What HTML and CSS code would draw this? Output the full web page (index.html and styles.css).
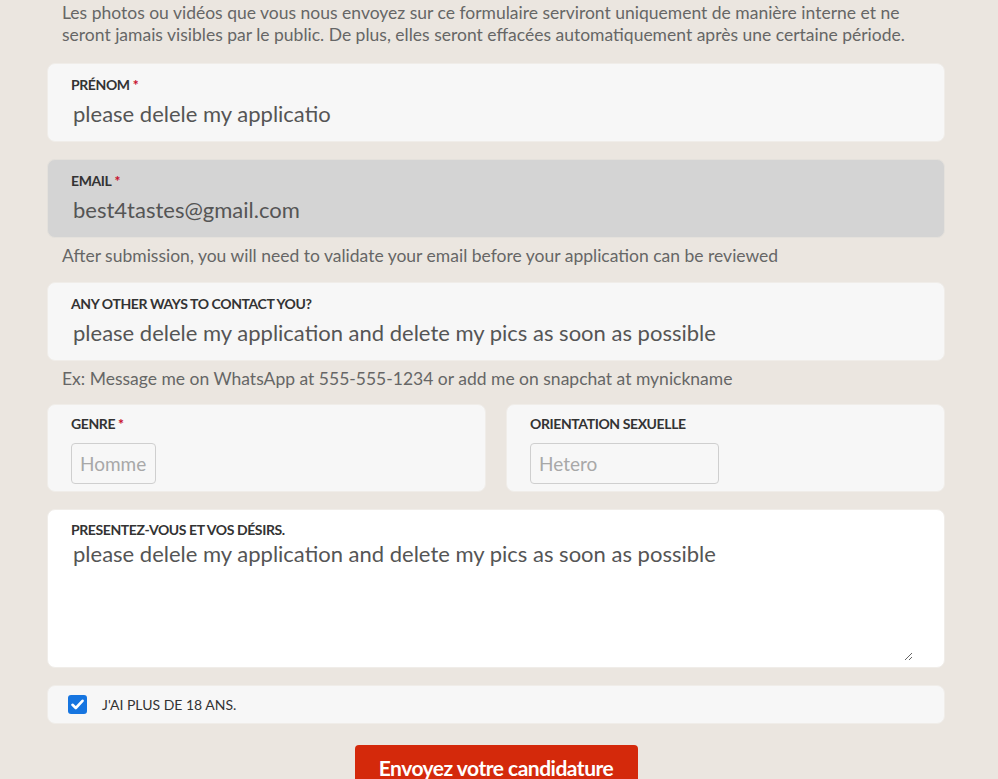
FILE: index.html
```html
<!DOCTYPE html>
<html lang="fr">
<head>
<meta charset="utf-8">
<title>Candidature</title>
<link rel="stylesheet" href="styles.css">
</head>
<body>
<div class="wrap">
  <p class="intro">Les photos ou vidéos que vous nous envoyez sur ce formulaire serviront uniquement de manière interne et ne seront jamais visibles par le public. De plus, elles seront effacées automatiquement après une certaine période.</p>

  <div class="card">
    <label class="lbl">PRÉNOM<span class="req">*</span></label>
    <input class="val" type="text" value="please delele my applicatio">
  </div>

  <div class="card card-disabled">
    <label class="lbl">EMAIL<span class="req">*</span></label>
    <input class="val" type="text" value="best4tastes@gmail.com" disabled>
  </div>
  <p class="help">After submission, you will need to validate your email before your application can be reviewed</p>

  <div class="card">
    <label class="lbl">ANY OTHER WAYS TO CONTACT YOU?</label>
    <input class="val" type="text" value="please delele my application and delete my pics as soon as possible">
  </div>
  <p class="help help-tight">Ex: Message me on WhatsApp at 555-555-1234 or add me on snapchat at mynickname</p>

  <div class="row">
    <div class="card card-half">
      <label class="lbl">GENRE<span class="req">*</span></label>
      <div class="select select-genre">Homme</div>
    </div>
    <div class="card card-half">
      <label class="lbl">ORIENTATION SEXUELLE</label>
      <div class="select select-orient">Hetero</div>
    </div>
  </div>

  <div class="card card-area">
    <label class="lbl">PRESENTEZ-VOUS ET VOS DÉSIRS.</label>
    <textarea class="area">please delele my application and delete my pics as soon as possible</textarea>
  </div>

  <div class="card card-check">
    <span class="box"><svg width="13" height="11" viewBox="0 0 13 11"><path d="M1.5 5.8 L4.8 9 L11.5 1.8" fill="none" stroke="#fff" stroke-width="2.6" stroke-linecap="round" stroke-linejoin="round"/></svg></span>
    <span class="check-lbl">J'AI PLUS DE 18 ANS.</span>
  </div>

  <div class="actions">
    <button class="submit" type="button">Envoyez votre candidature</button>
  </div>
</div>
</body>
</html>
```
FILE: styles.css
```css
* { box-sizing: border-box; }
html, body { margin: 0; padding: 0; }
body {
  background: #ebe6e0;
  font-family: Lato, "Open Sans", sans-serif;
  color: #666;
}
.wrap {
  width: 898px;
  margin-left: 47px;
  padding-top: 2px;
}
.intro {
  margin: 0 0 17px;
  padding-left: 15px;
  max-width: 865px;
  font-size: 17.5px;
  line-height: 22px;
  color: #666;
}
.card {
  background: #f7f7f7;
  border: 1px solid #f0ede9;
  border-radius: 8px;
  height: 79px;
  padding: 12px 23px 0;
  margin-bottom: 17px;
  display: flex;
  flex-direction: column;
}
.card-disabled { background: #d4d4d4; border-color: #e4e1dc; }
.lbl {
  font-size: 14px;
  font-weight: 700;
  line-height: 17px;
  color: #333;
  letter-spacing: -0.4px;
}
.req { color: #c8102e; margin-left: 3px; font-size: 14px; font-weight: 900; }
.val {
  border: none;
  background: transparent;
  font-family: Lato, sans-serif;
  font-size: 22px;
  line-height: 26px;
  height: 26px;
  color: #555;
  padding: 0 2px;
  margin-top: 8px;
  outline: none;
  width: 100%;
}
.val:disabled { color: #555; }
.help {
  margin: -10px 0 15px;
  padding-left: 15px;
  font-size: 17.5px;
  line-height: 22px;
  color: #666;
}
.help-tight { margin-bottom: 14px; }
.row {
  display: flex;
  gap: 20px;
}
.card-half {
  flex: 1;
  height: 88px;
  padding-top: 10px;
}
.select {
  margin-top: 11px;
  height: 41px;
  border: 1px solid #cfcfcf;
  border-radius: 4px;
  font-size: 19px;
  line-height: 39px;
  padding-left: 8px;
  color: #a8a8a8;
  background: #f7f7f7;
}
.select-genre { width: 85px; padding-left: 8px; }
.select-orient { width: 189px; }
.card-area {
  background: #fff;
  height: 159px;
  padding-top: 11px;
}
.area {
  border: none;
  background: transparent;
  font-family: Lato, sans-serif;
  font-size: 22px;
  line-height: 26px;
  color: #555;
  padding: 0 2px;
  margin-top: 3px;
  height: 120px;
  width: calc(100% - 8px);
  resize: vertical;
  outline: none;
}
.card-check {
  height: 39px;
  flex-direction: row;
  align-items: center;
  padding: 0 0 0 20px;
}
.box {
  width: 19px;
  height: 19px;
  border-radius: 3px;
  background: #1675e0;
  display: flex;
  align-items: center;
  justify-content: center;
}
.check-lbl {
  margin-left: 15px;
  font-size: 14px;
  color: #333;
}
.actions {
  display: flex;
  justify-content: center;
  margin-top: 21px;
}
.submit {
  width: 283px;
  height: 48px;
  background: #d4290b;
  border: none;
  border-radius: 4px;
  color: #fff;
  font-family: Lato, sans-serif;
  font-weight: 700;
  font-size: 21px;
  letter-spacing: -0.5px;
  padding: 0 0 4px;
}
```
